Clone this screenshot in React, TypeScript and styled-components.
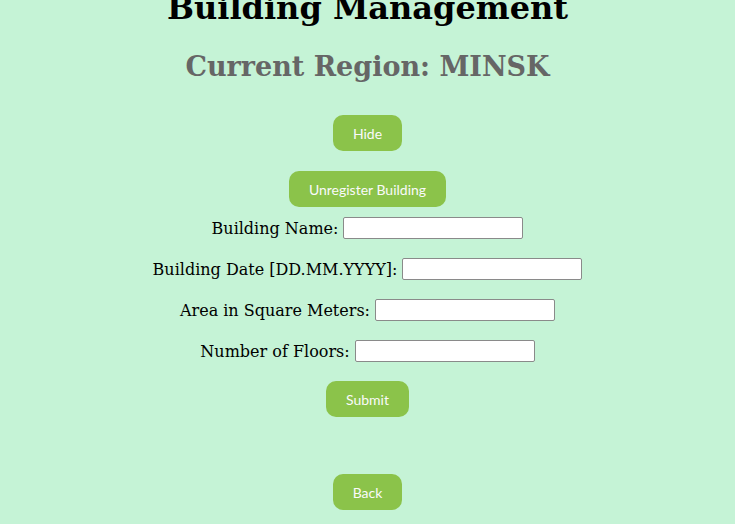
import React from "react";
import styled, { createGlobalStyle } from "styled-components";

const Global = createGlobalStyle`
  html, body { margin: 0; padding: 0; background: #c5f3d6; overflow: hidden; }
  body { font-family: "DejaVu Serif", serif; }
`;

const Page = styled.div`
  display: flex;
  flex-direction: column;
  align-items: center;
  margin-top: -11px;
`;

const Title = styled.h1`
  margin: 0;
  font-size: 32px;
  font-weight: bold;
  color: #000;
  font-family: "DejaVu Serif", serif;
`;

const Region = styled.h2`
  margin: 24px 0 0;
  font-size: 27px;
  font-weight: bold;
  color: #666;
  font-family: "DejaVu Serif", serif;
`;

const Button = styled.button<{ $mt: number }>`
  margin-top: ${(p) => p.$mt}px;
  height: 36px;
  padding: 0 20px;
  border: none;
  border-radius: 10px;
  background: #8bc34a;
  color: #fafafa;
  font-family: "Lato", "Open Sans", sans-serif;
  font-size: 14px;
  cursor: pointer;
`;

const Form = styled.form`
  display: flex;
  flex-direction: column;
  align-items: center;
  gap: 19px;
  margin-top: 10px;
`;

const Row = styled.div`
  display: flex;
  align-items: center;
  gap: 5px;
  height: 22px;
`;

const Label = styled.label`
  font-size: 16px;
  color: #000;
`;

const Input = styled.input`
  box-sizing: border-box;
  width: 180px;
  height: 22px;
  border: 1px solid #8a8a8a;
  border-radius: 2px;
  background: #fff;
  padding: 1px 2px;
`;

const fields = [
  "Building Name:",
  "Building Date [DD.MM.YYYY]:",
  "Area in Square Meters:",
  "Number of Floors:",
];

export default function App() {
  return (
    <>
      <Global />
      <Page>
        <Title>Building Management</Title>
        <Region>Current Region: MINSK</Region>
        <Button $mt={33}>Hide</Button>
        <Button $mt={20}>Unregister Building</Button>
        <Form onSubmit={(e) => e.preventDefault()}>
          {fields.map((f) => (
            <Row key={f}>
              <Label>{f}</Label>
              <Input type="text" />
            </Row>
          ))}
          <Button $mt={0} type="submit">Submit</Button>
        </Form>
        <Button $mt={57}>Back</Button>
      </Page>
    </>
  );
}
